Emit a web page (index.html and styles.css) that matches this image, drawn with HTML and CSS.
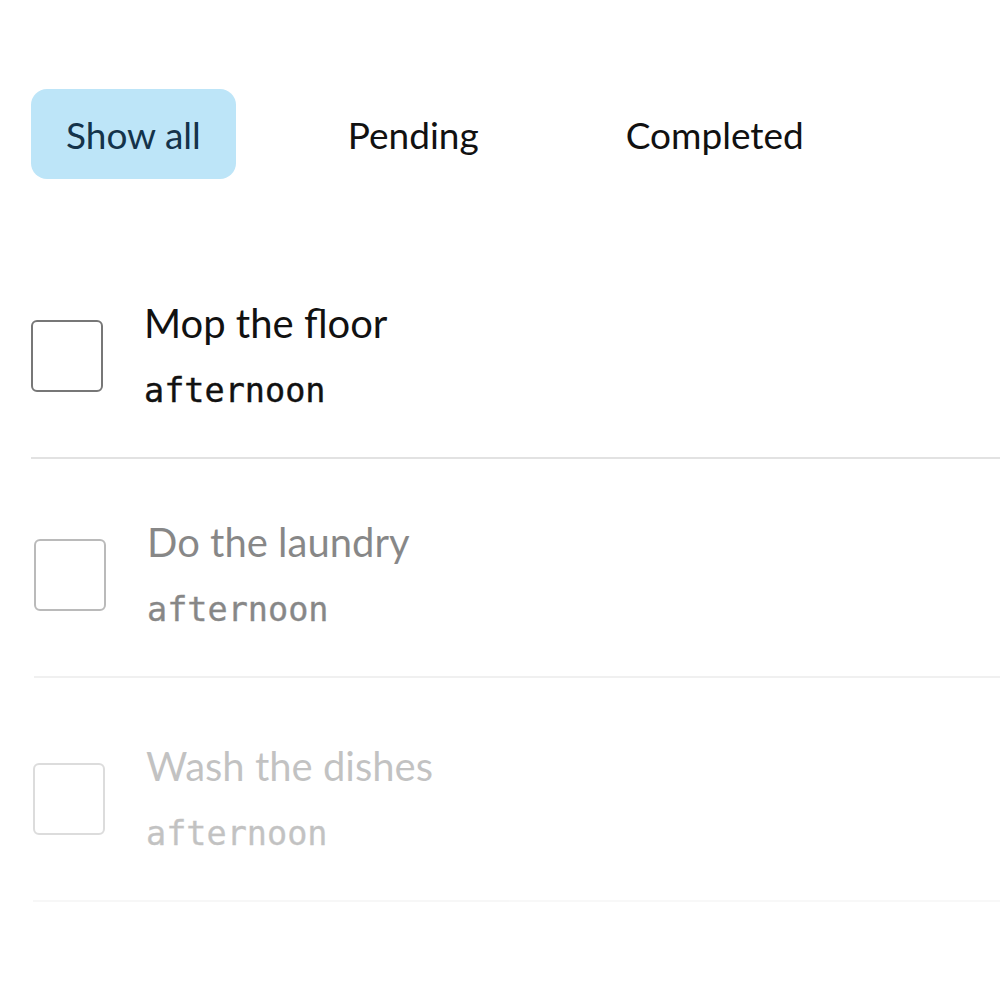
FILE: index.html
```html
<!DOCTYPE html>
<html>
<head>
<meta charset="utf-8">
<link rel="stylesheet" href="styles.css">
</head>
<body>
<div class="app">
  <nav class="filters">
    <button class="filter active">Show all</button>
    <button class="filter">Pending</button>
    <button class="filter">Completed</button>
  </nav>
  <ul class="tasks">
    <li class="task">
      <span class="check"></span>
      <div class="info">
        <div class="title">Mop the floor</div>
        <div class="time">afternoon</div>
      </div>
    </li>
    <li class="task task-2">
      <span class="check"></span>
      <div class="info">
        <div class="title">Do the laundry</div>
        <div class="time">afternoon</div>
      </div>
    </li>
    <li class="task task-3">
      <span class="check"></span>
      <div class="info">
        <div class="title">Wash the dishes</div>
        <div class="time">afternoon</div>
      </div>
    </li>
  </ul>
</div>
</body>
</html>
```
FILE: styles.css
```css
* { box-sizing: border-box; }
html, body { margin: 0; padding: 0; background: #fff; }
body { font-family: Lato, "Noto Sans", sans-serif; color: #111; }
.app { padding: 89px 0 0 31px; }
.filters { display: flex; gap: 77px; }
.filter {
  font-family: Lato, sans-serif;
  font-size: 37px;
  color: #111;
  background: transparent;
  border: none;
  border-radius: 16px;
  height: 90px;
  padding: 0 35px;
  cursor: pointer;
}
.filter.active { background: #bde5f8; color: #14334a; }
.tasks { list-style: none; margin: 0; padding: 0; margin-top: 61px; }
.task {
  display: flex;
  align-items: center;
  gap: 41px;
  padding: 59px 0 46px 0;
  border-bottom: 2px solid #e2e2e2;
}
.check {
  width: 72px;
  height: 72px;
  border: 2px solid #777;
  border-radius: 6px;
  flex: none;
  margin-top: 2px;
}
.info { display: flex; flex-direction: column; }
.title { font-size: 40px; line-height: 48px; }
.time { font-family: "DejaVu Sans Mono", monospace; font-size: 33.5px; line-height: 40px; margin-top: 24px; -webkit-text-stroke: 0.4px currentColor; }
.task-2 { margin-left: 3px; opacity: 0.5; }
.task-3 { margin-left: 2px; margin-top: 5px; opacity: 0.25; }
```
